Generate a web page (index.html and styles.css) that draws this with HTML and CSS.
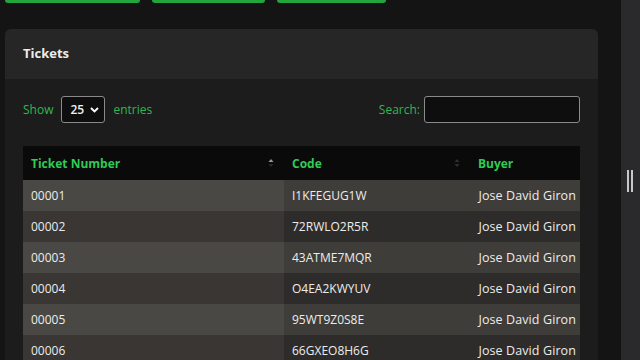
FILE: index.html
```html
<!DOCTYPE html>
<html>
<head>
<meta charset="utf-8">
<link rel="stylesheet" href="styles.css">
</head>
<body>
<div class="layout">
  <main class="main">
    <div class="btns">
      <span class="btn b1"></span>
      <span class="btn b2"></span>
      <span class="btn b3"></span>
    </div>
    <section class="card">
      <header class="card-head">Tickets</header>
      <div class="card-body">
        <div class="controls">
          <label class="len">Show
            <span class="sel">25
              <svg width="9" height="6" viewBox="0 0 9 6"><path d="M1 1l3.5 3.5L8 1" fill="none" stroke="#fff" stroke-width="1.8"/></svg>
            </span>
            entries</label>
          <label class="search">Search: <span class="inp"></span></label>
        </div>
        <table class="tbl">
          <thead>
            <tr>
              <th class="c1">Ticket Number<span class="sort"><svg width="6" height="10" viewBox="0 0 6 10"><path d="M3 1L5.5 4H0.5z" fill="#9a9a9a"/><path d="M3 9L5.5 6H0.5z" fill="#2a2a2a"/></svg></span></th>
              <th class="c2">Code<span class="sort"><svg width="6" height="10" viewBox="0 0 6 10"><path d="M3 1L5.5 4H0.5z" fill="#2e2e2e"/><path d="M3 9L5.5 6H0.5z" fill="#2e2e2e"/></svg></span></th>
              <th class="c3">Buyer</th>
            </tr>
          </thead>
          <tbody>
            <tr class="odd"><td class="c1">00001</td><td class="c2">I1KFEGUG1W</td><td class="c3">Jose David Giron</td></tr>
            <tr class="even"><td class="c1">00002</td><td class="c2">72RWLO2R5R</td><td class="c3">Jose David Giron</td></tr>
            <tr class="odd"><td class="c1">00003</td><td class="c2">43ATME7MQR</td><td class="c3">Jose David Giron</td></tr>
            <tr class="even"><td class="c1">00004</td><td class="c2">O4EA2KWYUV</td><td class="c3">Jose David Giron</td></tr>
            <tr class="odd"><td class="c1">00005</td><td class="c2">95WT9Z0S8E</td><td class="c3">Jose David Giron</td></tr>
            <tr class="even"><td class="c1">00006</td><td class="c2">66GXEO8H6G</td><td class="c3">Jose David Giron</td></tr>
          </tbody>
        </table>
      </div>
    </section>
  </main>
  <aside class="side"><span class="grip"></span></aside>
</div>
</body>
</html>
```
FILE: styles.css
```css
* { box-sizing: border-box; }
html, body { margin: 0; height: 100%; overflow: hidden; }
body {
  background: #141414;
  font-family: "Open Sans", "Liberation Sans", sans-serif;
  font-size: 12px;
  color: #e8e8e8;
}
.layout { display: flex; height: 360px; }
.main { width: 621px; padding: 0 23px 0 5px; }
.side {
  width: 19px;
  background: #2a2a2c;
  display: flex;
  align-items: flex-start;
  justify-content: center;
  padding-top: 170px;
}
.grip {
  width: 6px; height: 22px;
  border-left: 2px solid #c8c8c8;
  border-right: 2px solid #c8c8c8;
  margin-left: -2px;
}
.btns { display: flex; height: 3px; margin-bottom: 26px; }
.btn { display: block; height: 3px; background: #23a53d; border-radius: 0 0 3px 3px; }
.b1 { width: 135px; }
.b2 { width: 113px; margin-left: 12px; }
.b3 { width: 109px; margin-left: 12px; }
.card { background: #1c1c1c; border-radius: 6px 6px 0 0; height: 340px; }
.card-head {
  background: #262626;
  height: 50px;
  border-radius: 6px 6px 0 0;
  padding: 15px 18px 0;
  font-weight: 700;
  font-size: 13px;
  color: #ececec;
}
.card-body { padding: 17px 18px 0; }
.controls {
  display: flex;
  justify-content: space-between;
  align-items: center;
  height: 27px;
  color: #2fb84f;
  font-size: 12px;
}
.len { display: flex; align-items: center; gap: 8px; }
.sel {
  display: flex; align-items: center; justify-content: space-between;
  width: 44px; height: 27px;
  border: 1px solid #8a8a8a; border-radius: 3px;
  background: #0e0e0e; color: #f0f0f0;
  padding: 0 5px 0 8px;
  font-size: 12px; font-weight: 600;
}
.search { display: flex; align-items: center; gap: 4px; }
.inp {
  display: block; width: 156px; height: 27px;
  border: 1px solid #8a8a8a; border-radius: 3px; background: #0e0e0e;
}
.tbl {
  margin-top: 23px;
  width: 557px;
  border-collapse: collapse;
  table-layout: fixed;
}
.tbl th {
  background: #0a0a0a;
  color: #2fcb55;
  font-weight: 700;
  text-align: left;
  height: 34px;
  padding: 0 8px;
  position: relative;
  font-size: 12px;
}
.sort { position: absolute; right: 10px; top: 12px; display: flex; }
.c1 { width: 261px; }
.c2 { width: 186px; }
.c3 { width: 110px; }
.tbl td { height: 31px; padding: 0 8px; color: #ececec; font-size: 12px; white-space: nowrap; }
.tbl td.c3 { padding: 0 4px 0 0; text-align: right; font-size: 12.5px; letter-spacing: 0.1px; }
.odd td { background: #3f3d3a; }
.odd td.c1 { background: #4a4844; }
.even td { background: #2e2c2a; }
.even td.c1 { background: #393633; }
```
